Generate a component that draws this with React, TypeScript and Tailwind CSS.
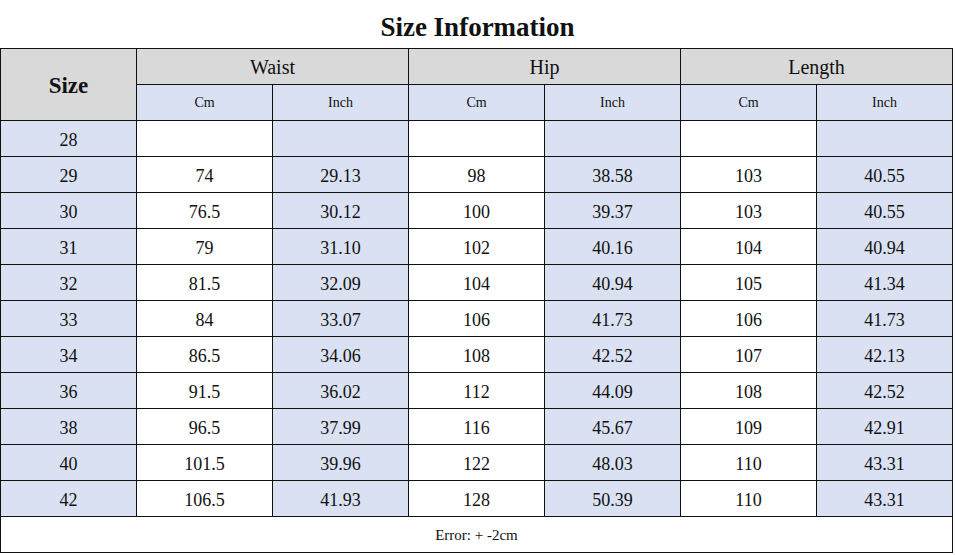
import React from 'react';

const rows: [string, string, string, string, string, string, string][] = [
  ['28', '', '', '', '', '', ''],
  ['29', '74', '29.13', '98', '38.58', '103', '40.55'],
  ['30', '76.5', '30.12', '100', '39.37', '103', '40.55'],
  ['31', '79', '31.10', '102', '40.16', '104', '40.94'],
  ['32', '81.5', '32.09', '104', '40.94', '105', '41.34'],
  ['33', '84', '33.07', '106', '41.73', '106', '41.73'],
  ['34', '86.5', '34.06', '108', '42.52', '107', '42.13'],
  ['36', '91.5', '36.02', '112', '44.09', '108', '42.52'],
  ['38', '96.5', '37.99', '116', '45.67', '109', '42.91'],
  ['40', '101.5', '39.96', '122', '48.03', '110', '43.31'],
  ['42', '106.5', '41.93', '128', '50.39', '110', '43.31'],
];

const cell = 'flex items-center justify-center border-r-[1.5px] border-b-[1.5px] border-[#111]';

export default function App() {
  return (
    <div className="w-[955px] h-[555px] bg-white text-[#111] font-['Liberation_Serif','Times_New_Roman',serif]">
      <div className="h-12 flex items-center justify-center pt-[6px]">
        <h1 className="text-[27px] font-bold">Size Information</h1>
      </div>
      <div className="w-[953px] grid grid-cols-[repeat(7,136px)] auto-rows-[36px] border-t-[1.5px] border-l-[1.5px] border-[#111]">
        <div className={`${cell} row-span-2 bg-[#d9d9d9] text-[23px] font-bold pt-[3px]`}>Size</div>
        <div className={`${cell} col-span-2 bg-[#d9d9d9] text-[20px]`}>Waist</div>
        <div className={`${cell} col-span-2 bg-[#d9d9d9] text-[20px]`}>Hip</div>
        <div className={`${cell} col-span-2 bg-[#d9d9d9] text-[20px]`}>Length</div>
        {['Cm', 'Inch', 'Cm', 'Inch', 'Cm', 'Inch'].map((t, i) => (
          <div key={i} className={`${cell} bg-[#d9e1f2] text-[14px]`}>{t}</div>
        ))}
        {rows.map((r, ri) =>
          r.map((v, ci) => (
            <div
              key={`${ri}-${ci}`}
              className={`${cell} text-[18px] pt-[3px] ${ci % 2 === 0 ? 'bg-[#d9e1f2]' : 'bg-white'}`}
            >
              {v}
            </div>
          ))
        )}
        <div className={`${cell} col-span-7 bg-white text-[15px] pt-[1px]`}>Error: + -2cm</div>
      </div>
    </div>
  );
}
